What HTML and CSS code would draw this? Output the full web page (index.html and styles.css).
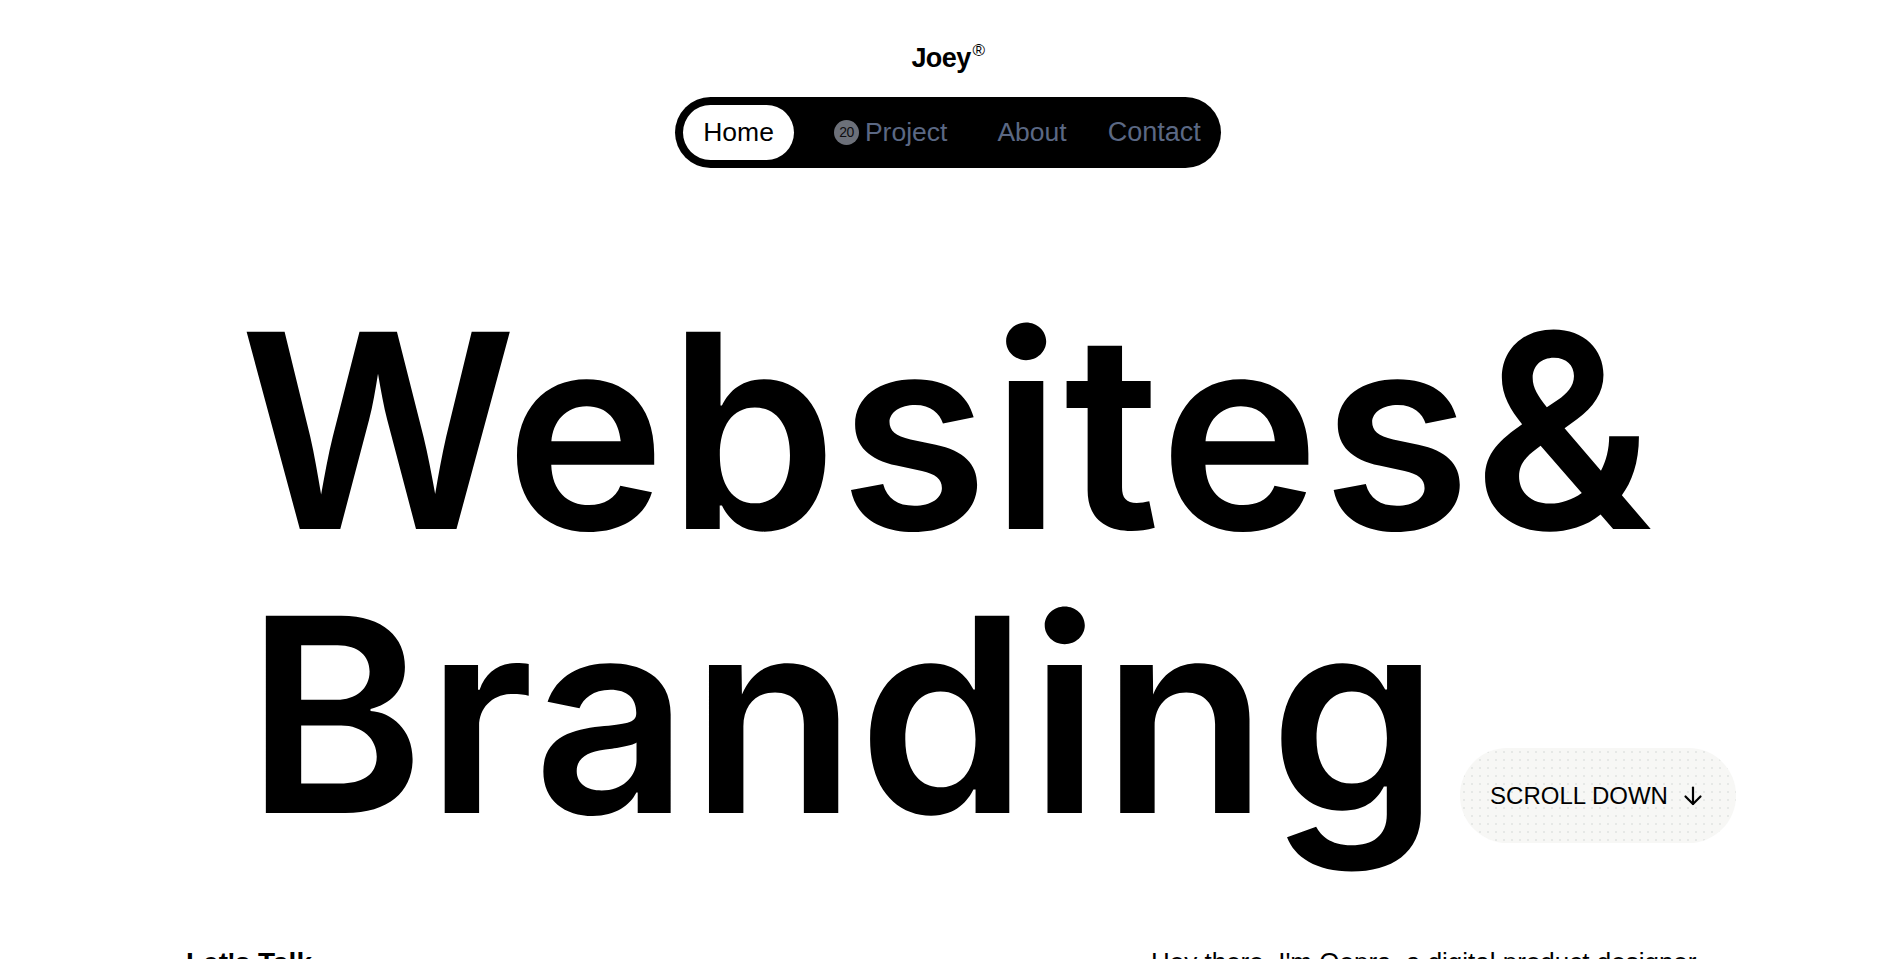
FILE: index.html
```html
<!DOCTYPE html>
<html lang="en">
<head>
<meta charset="utf-8">
<title>Joey — Websites &amp; Branding</title>
<link rel="stylesheet" href="styles.css">
</head>
<body>
<header class="site-header">
  <div class="logo">Joey<sup class="reg">®</sup></div>
  <nav class="nav">
    <a class="nav-item active" href="#">Home</a>
    <a class="nav-item project" href="#"><span class="badge">20</span>Project</a>
    <a class="nav-item" href="#">About</a>
    <a class="nav-item" href="#">Contact</a>
  </nav>
</header>

<main>
  <section class="hero">
    <h1 class="headline">
      <span class="line">Websites&amp;</span>
      <span class="line line-two">
        <span>Branding</span>
        <a class="scroll-btn" href="#">SCROLL DOWN
          <svg class="arrow" width="22" height="22" viewBox="0 0 22 22" fill="none" stroke="#000" stroke-width="2.2" stroke-linecap="round" stroke-linejoin="round"><path d="M11 2.5v16.5"/><path d="M3.5 11.5l7.5 7.5 7.5-7.5"/></svg>
        </a>
      </span>
    </h1>
  </section>

  <section class="intro">
    <h2 class="intro-title">Let's Talk</h2>
    <p class="intro-text">Hey there, I'm Oepra, a digital product designer</p>
  </section>
</main>
</body>
</html>
```

FILE: styles.css
```css
* { box-sizing: border-box; }

html, body {
  margin: 0;
  padding: 0;
  background: #ffffff;
  color: #000;
  font-family: "Liberation Sans", Arial, sans-serif;
}

a { color: inherit; text-decoration: none; }

.site-header {
  display: flex;
  flex-direction: column;
  align-items: center;
  padding: 42px 0 0 12px;
}

.logo {
  font-weight: 700;
  font-size: 27px;
  line-height: 32px;
  height: 32px;
  letter-spacing: -0.6px;
}

.reg {
  font-size: 17px;
  line-height: 1;
  font-weight: 400;
  vertical-align: 0;
  position: relative;
  top: -11px;
  margin-left: 2px;
}

.nav {
  margin-top: 23px;
  display: flex;
  align-items: center;
  background: #000;
  border-radius: 999px;
  padding: 8px 0 8px 8px;
  height: 71px;
}

.nav-item {
  font-size: 26.5px;
  line-height: 55px;
  height: 55px;
  color: #5b6884;
  padding: 0 20px;
  display: flex;
  align-items: center;
}

.nav-item.active {
  background: #fff;
  color: #000;
  border-radius: 999px;
  padding: 0 20px;
}

.nav-item.project {
  padding-left: 40px;
  padding-right: 30px;
}

.nav-item:last-child {
  font-size: 27px;
  padding-left: 21px;
  padding-right: 20px;
}

.badge {
  width: 25px;
  height: 25px;
  border-radius: 50%;
  background: #6c7079;
  color: #0d0d10;
  font-size: 14px;
  line-height: 25px;
  text-align: center;
  letter-spacing: -0.6px;
  margin-right: 6px;
}

.hero {
  margin-top: 120px;
  padding: 0 148px 0 240px;
}

.headline {
  margin: 0;
  font-family: "Inter", "Liberation Sans", sans-serif;
  font-weight: 600;
  font-size: 271px;
  line-height: 284px;
  letter-spacing: 2.4px;
  display: flex;
  flex-direction: column;
}

.line { display: block; white-space: nowrap; }

.line-two {
  display: flex;
  align-items: flex-end;
  padding-left: 6px;
  letter-spacing: 1.8px;
}

.scroll-btn {
  margin-left: auto;
  margin-bottom: 13px;
  height: 95px;
  width: 276px;
  border-radius: 999px;
  background-color: #f7f7f5;
  background-image: radial-gradient(circle, #e6e8e6 0.8px, transparent 1.2px);
  background-size: 8px 8px;
  display: flex;
  align-items: center;
  justify-content: center;
  gap: 14px;
  font-family: "Liberation Sans", Arial, sans-serif;
  font-weight: 400;
  font-size: 24px;
  line-height: 1;
  letter-spacing: 0;
  color: #000;
  padding: 0 2px 0 0;
}

.arrow { display: block; }

.intro {
  margin-top: 87px;
  display: grid;
  grid-template-columns: 965px 1fr;
  align-items: start;
  padding-left: 186px;
}

.intro-title {
  margin: 0;
  font-size: 28px;
  font-weight: 700;
  line-height: 39px;
}

.intro-text {
  margin: 0;
  font-size: 26px;
  line-height: 39px;
  max-width: 600px;
}
```
